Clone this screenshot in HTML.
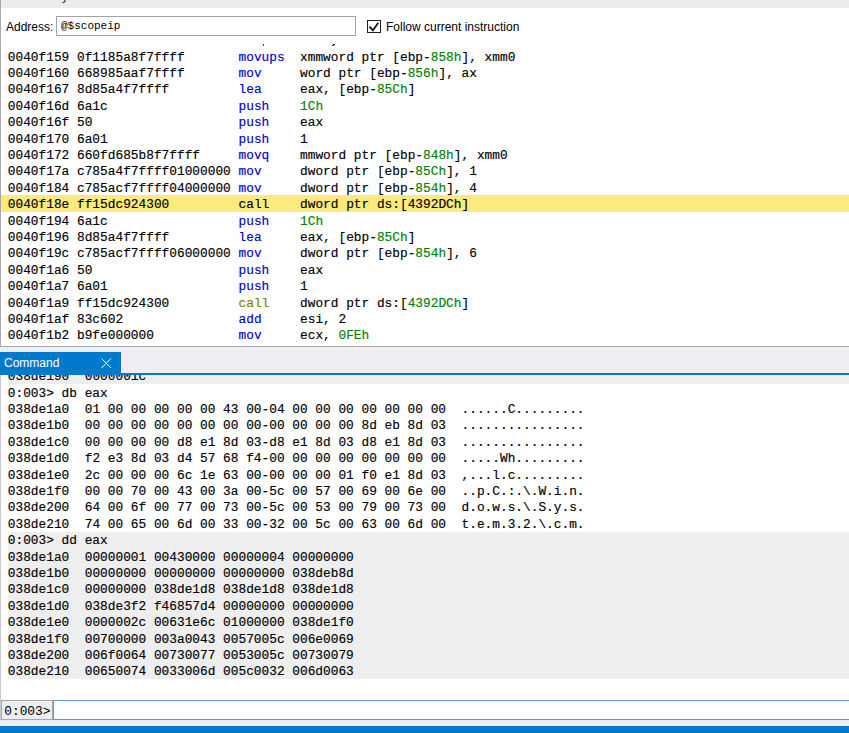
<!DOCTYPE html>
<html><head><meta charset="utf-8"><style>
html,body{margin:0;padding:0;}
body{width:849px;height:733px;overflow:hidden;position:relative;background:#fff;font-family:"Liberation Sans",sans-serif;}
.abs{position:absolute;}
.r{position:absolute;left:0;right:0;height:16px;}
.c{position:absolute;top:2px;white-space:pre;font-family:"Liberation Mono",monospace;font-size:12.82px;line-height:16px;color:#000;-webkit-text-stroke:0.15px currentColor;}
.b{color:#0000c8;} .g{color:#008000;} .k{color:#000;} .o{color:#808000;}
</style></head><body>
<div class="abs" style="left:0;top:0;width:849px;height:8px;background:#ececf0"></div>
<svg class="abs" style="left:60px;top:0" width="8" height="5" viewBox="0 0 8 5"><path d="M5.3 -1 L5.0 1.2 Q4.6 2.6 2.6 2.6" stroke="#222" stroke-width="1.1" fill="none"/></svg>
<div class="abs" style="left:0;top:0;width:1px;height:347px;background:#a9a9a9"></div>
<div class="abs" style="left:6px;top:20px;font-size:12px;line-height:14px;color:#000">Address:</div>
<div class="abs" style="left:56px;top:16px;width:298px;height:18px;border:1px solid #a2a2aa;background:#fff"></div>
<div class="abs" style="left:61px;top:19px;font-family:'Liberation Mono';font-size:11px;line-height:14px;white-space:pre">@$scopeip</div>
<div class="abs" style="left:367px;top:20px;width:12px;height:11px;border:1px solid #1e1e1e;background:#fff"></div>
<svg class="abs" style="left:367px;top:20px" width="14" height="13" viewBox="0 0 14 13"><path d="M2.5 6.8 L6 10.2 L11.3 2.8" stroke="#1e1e1e" stroke-width="1.9" fill="none"/></svg>
<div class="abs" style="left:386px;top:20px;font-size:12px;line-height:14px;color:#000">Follow current instruction</div>
<div class="abs" style="left:1px;top:44px;width:848px;height:302px;overflow:hidden">
<div class="abs" style="left:0;top:151px;width:848px;height:17px;background:#fdea7c"></div>
<div class="abs" style="left:262px;top:0px;width:1px;height:2px;background:#3030d0"></div>
<div class="abs" style="left:332px;top:0px;width:2px;height:1px;background:#222"></div>
<div class="abs" style="left:331px;top:1px;width:2px;height:1px;background:#444"></div>
<div class="r" style="top:3.60px"><span class="c" style="left:6.80px">0040f159 0f1185a8f7ffff</span><span class="c b" style="left:237.50px">movups</span><span class="c" style="left:299.02px"><span class="k">xmmword ptr [ebp-</span><span class="g">858h</span><span class="k">], xmm0</span></span></div>
<div class="r" style="top:20.00px"><span class="c" style="left:6.80px">0040f160 668985aaf7ffff</span><span class="c b" style="left:237.50px">mov</span><span class="c" style="left:299.02px"><span class="k">word ptr [ebp-</span><span class="g">856h</span><span class="k">], ax</span></span></div>
<div class="r" style="top:36.40px"><span class="c" style="left:6.80px">0040f167 8d85a4f7ffff</span><span class="c b" style="left:237.50px">lea</span><span class="c" style="left:299.02px"><span class="k">eax, [ebp-</span><span class="g">85Ch</span><span class="k">]</span></span></div>
<div class="r" style="top:52.80px"><span class="c" style="left:6.80px">0040f16d 6a1c</span><span class="c b" style="left:237.50px">push</span><span class="c" style="left:299.02px"><span class="g">1Ch</span></span></div>
<div class="r" style="top:69.20px"><span class="c" style="left:6.80px">0040f16f 50</span><span class="c b" style="left:237.50px">push</span><span class="c" style="left:299.02px"><span class="k">eax</span></span></div>
<div class="r" style="top:85.60px"><span class="c" style="left:6.80px">0040f170 6a01</span><span class="c b" style="left:237.50px">push</span><span class="c" style="left:299.02px"><span class="k">1</span></span></div>
<div class="r" style="top:102.00px"><span class="c" style="left:6.80px">0040f172 660fd685b8f7ffff</span><span class="c b" style="left:237.50px">movq</span><span class="c" style="left:299.02px"><span class="k">mmword ptr [ebp-</span><span class="g">848h</span><span class="k">], xmm0</span></span></div>
<div class="r" style="top:118.40px"><span class="c" style="left:6.80px">0040f17a c785a4f7ffff01000000</span><span class="c b" style="left:237.50px">mov</span><span class="c" style="left:299.02px"><span class="k">dword ptr [ebp-</span><span class="g">85Ch</span><span class="k">], 1</span></span></div>
<div class="r" style="top:134.80px"><span class="c" style="left:6.80px">0040f184 c785acf7ffff04000000</span><span class="c b" style="left:237.50px">mov</span><span class="c" style="left:299.02px"><span class="k">dword ptr [ebp-</span><span class="g">854h</span><span class="k">], 4</span></span></div>
<div class="r" style="top:151.20px"><span class="c" style="left:6.80px">0040f18e ff15dc924300</span><span class="c k" style="left:237.50px">call</span><span class="c" style="left:299.02px"><span class="k">dword ptr ds:[</span><span class="k">4392DCh</span><span class="k">]</span></span></div>
<div class="r" style="top:167.60px"><span class="c" style="left:6.80px">0040f194 6a1c</span><span class="c b" style="left:237.50px">push</span><span class="c" style="left:299.02px"><span class="g">1Ch</span></span></div>
<div class="r" style="top:184.00px"><span class="c" style="left:6.80px">0040f196 8d85a4f7ffff</span><span class="c b" style="left:237.50px">lea</span><span class="c" style="left:299.02px"><span class="k">eax, [ebp-</span><span class="g">85Ch</span><span class="k">]</span></span></div>
<div class="r" style="top:200.40px"><span class="c" style="left:6.80px">0040f19c c785acf7ffff06000000</span><span class="c b" style="left:237.50px">mov</span><span class="c" style="left:299.02px"><span class="k">dword ptr [ebp-</span><span class="g">854h</span><span class="k">], 6</span></span></div>
<div class="r" style="top:216.80px"><span class="c" style="left:6.80px">0040f1a6 50</span><span class="c b" style="left:237.50px">push</span><span class="c" style="left:299.02px"><span class="k">eax</span></span></div>
<div class="r" style="top:233.20px"><span class="c" style="left:6.80px">0040f1a7 6a01</span><span class="c b" style="left:237.50px">push</span><span class="c" style="left:299.02px"><span class="k">1</span></span></div>
<div class="r" style="top:249.60px"><span class="c" style="left:6.80px">0040f1a9 ff15dc924300</span><span class="c o" style="left:237.50px">call</span><span class="c" style="left:299.02px"><span class="k">dword ptr ds:[</span><span class="g">4392DCh</span><span class="k">]</span></span></div>
<div class="r" style="top:266.00px"><span class="c" style="left:6.80px">0040f1af 83c602</span><span class="c b" style="left:237.50px">add</span><span class="c" style="left:299.02px"><span class="k">esi, 2</span></span></div>
<div class="r" style="top:282.40px"><span class="c" style="left:6.80px">0040f1b2 b9fe000000</span><span class="c b" style="left:237.50px">mov</span><span class="c" style="left:299.02px"><span class="k">ecx, </span><span class="g">0FEh</span></span></div>
</div>
<div class="abs" style="left:0;top:346px;width:849px;height:1px;background:#a9a9a9"></div>
<div class="abs" style="left:0;top:347px;width:849px;height:26px;background:#eeeef2"></div>
<div class="abs" style="left:0;top:352px;width:121px;height:21px;background:#007acc"></div>
<div class="abs" style="left:0;top:373px;width:849px;height:2px;background:#007acc"></div>
<div class="abs" style="left:4px;top:356px;font-size:12px;line-height:14px;color:#fff">Command</div>
<svg class="abs" style="left:101px;top:358px" width="11" height="11" viewBox="0 0 11 11"><path d="M0.5 0.5 L10 10 M10 0.5 L0.5 10" stroke="#fff" stroke-width="1" fill="none"/></svg>
<div class="abs" style="left:0;top:375px;width:1px;height:345px;background:#c9c9d6"></div>
<div class="abs" style="left:1px;top:375px;width:848px;height:325px;overflow:hidden">
<div class="abs" style="left:7px;top:0;width:841px;height:8.60px;background:#eeeeee"></div>
<div class="abs" style="left:7px;top:156.80px;width:841px;height:147.00px;background:#eeeeee"></div>
<div class="r" style="top:-7.80px"><span class="c" style="left:6.80px">038de190</span><span class="c" style="left:83.70px">0000001c</span></div>
<div class="r" style="top:8.60px"><span class="c" style="left:6.80px">0:003&gt; db eax</span></div>
<div class="r" style="top:25.00px"><span class="c" style="left:6.80px">038de1a0</span><span class="c" style="left:83.70px">01 00 00 00 00 00 43 00-04 00 00 00 00 00 00 00</span><span class="c" style="left:460.51px">......C.........</span></div>
<div class="r" style="top:41.40px"><span class="c" style="left:6.80px">038de1b0</span><span class="c" style="left:83.70px">00 00 00 00 00 00 00 00-00 00 00 00 8d eb 8d 03</span><span class="c" style="left:460.51px">................</span></div>
<div class="r" style="top:57.80px"><span class="c" style="left:6.80px">038de1c0</span><span class="c" style="left:83.70px">00 00 00 00 d8 e1 8d 03-d8 e1 8d 03 d8 e1 8d 03</span><span class="c" style="left:460.51px">................</span></div>
<div class="r" style="top:74.20px"><span class="c" style="left:6.80px">038de1d0</span><span class="c" style="left:83.70px">f2 e3 8d 03 d4 57 68 f4-00 00 00 00 00 00 00 00</span><span class="c" style="left:460.51px">.....Wh.........</span></div>
<div class="r" style="top:90.60px"><span class="c" style="left:6.80px">038de1e0</span><span class="c" style="left:83.70px">2c 00 00 00 6c 1e 63 00-00 00 00 01 f0 e1 8d 03</span><span class="c" style="left:460.51px">,...l.c.........</span></div>
<div class="r" style="top:107.00px"><span class="c" style="left:6.80px">038de1f0</span><span class="c" style="left:83.70px">00 00 70 00 43 00 3a 00-5c 00 57 00 69 00 6e 00</span><span class="c" style="left:460.51px">..p.C.:.\.W.i.n.</span></div>
<div class="r" style="top:123.40px"><span class="c" style="left:6.80px">038de200</span><span class="c" style="left:83.70px">64 00 6f 00 77 00 73 00-5c 00 53 00 79 00 73 00</span><span class="c" style="left:460.51px">d.o.w.s.\.S.y.s.</span></div>
<div class="r" style="top:139.80px"><span class="c" style="left:6.80px">038de210</span><span class="c" style="left:83.70px">74 00 65 00 6d 00 33 00-32 00 5c 00 63 00 6d 00</span><span class="c" style="left:460.51px">t.e.m.3.2.\.c.m.</span></div>
<div class="r" style="top:156.20px"><span class="c" style="left:6.80px">0:003&gt; dd eax</span></div>
<div class="r" style="top:172.60px"><span class="c" style="left:6.80px">038de1a0</span><span class="c" style="left:83.70px">00000001 00430000 00000004 00000000</span></div>
<div class="r" style="top:189.00px"><span class="c" style="left:6.80px">038de1b0</span><span class="c" style="left:83.70px">00000000 00000000 00000000 038deb8d</span></div>
<div class="r" style="top:205.40px"><span class="c" style="left:6.80px">038de1c0</span><span class="c" style="left:83.70px">00000000 038de1d8 038de1d8 038de1d8</span></div>
<div class="r" style="top:221.80px"><span class="c" style="left:6.80px">038de1d0</span><span class="c" style="left:83.70px">038de3f2 f46857d4 00000000 00000000</span></div>
<div class="r" style="top:238.20px"><span class="c" style="left:6.80px">038de1e0</span><span class="c" style="left:83.70px">0000002c 00631e6c 01000000 038de1f0</span></div>
<div class="r" style="top:254.60px"><span class="c" style="left:6.80px">038de1f0</span><span class="c" style="left:83.70px">00700000 003a0043 0057005c 006e0069</span></div>
<div class="r" style="top:271.00px"><span class="c" style="left:6.80px">038de200</span><span class="c" style="left:83.70px">006f0064 00730077 0053005c 00730079</span></div>
<div class="r" style="top:287.40px"><span class="c" style="left:6.80px">038de210</span><span class="c" style="left:83.70px">00650074 0033006d 005c0032 006d0063</span></div>
</div>
<div class="abs" style="left:1px;top:700px;width:50px;height:18px;border:1px solid #a9a9a9;background:#eeeef2"></div>
<div class="abs" style="left:4.3px;top:703.5px;font-family:'Liberation Mono';font-size:12.82px;line-height:16px;white-space:pre">0:003&gt;</div>
<div class="abs" style="left:53px;top:700px;width:800px;height:18px;border:1px solid #5599e0;background:#fff"></div>
<div class="abs" style="left:0;top:720px;width:849px;height:6px;background:#eeeef2"></div>
<div class="abs" style="left:0;top:726px;width:849px;height:7px;background:#007acc"></div>
</body></html>
